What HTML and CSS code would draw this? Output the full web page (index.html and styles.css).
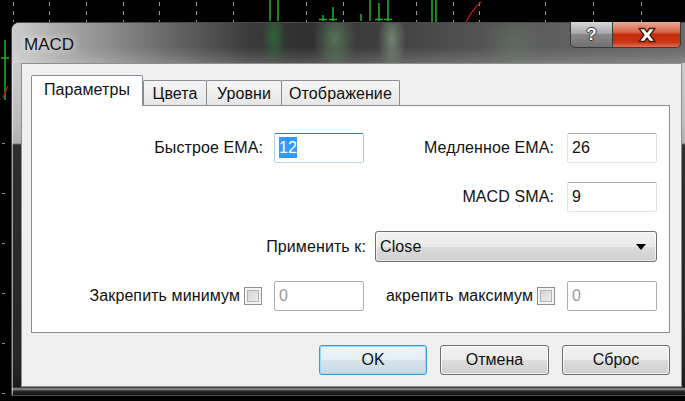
FILE: index.html
```html
<!DOCTYPE html>
<html lang="ru">
<head>
    <meta charset="UTF-8">
    <title>MACD</title>
    <link rel="stylesheet" href="styles.css">
</head>
<body>
    <svg class="chart" width="685" height="401" viewBox="0 0 685 401">
        <g stroke="#9a9a9a" stroke-width="1" stroke-dasharray="4 5">
            <line x1="13.5" y1="2" x2="13.5" y2="22"/>
            <line x1="49.5" y1="2" x2="49.5" y2="22"/>
            <line x1="86.5" y1="2" x2="86.5" y2="22"/>
            <line x1="123.5" y1="2" x2="123.5" y2="22"/>
            <line x1="159.5" y1="2" x2="159.5" y2="22"/>
            <line x1="196.5" y1="2" x2="196.5" y2="22"/>
            <line x1="233.5" y1="2" x2="233.5" y2="22"/>
            <line x1="306.5" y1="2" x2="306.5" y2="22"/>
            <line x1="343.5" y1="2" x2="343.5" y2="22"/>
            <line x1="416.5" y1="2" x2="416.5" y2="22"/>
            <line x1="453.5" y1="2" x2="453.5" y2="22"/>
            <line x1="479.5" y1="2" x2="479.5" y2="22"/>
            <line x1="545.5" y1="2" x2="545.5" y2="22"/>
            <line x1="593.5" y1="2" x2="593.5" y2="22"/>
            <line x1="641.5" y1="2" x2="641.5" y2="22"/>
        </g>
        <g stroke="#8a8a8a" stroke-width="1">
            <line x1="2" y1="143.5" x2="5" y2="143.5"/>
            <line x1="2" y1="193.5" x2="5" y2="193.5"/>
            <line x1="2" y1="243.5" x2="5" y2="243.5"/>
            <line x1="2" y1="293.5" x2="5" y2="293.5"/>
            <line x1="2" y1="343.5" x2="5" y2="343.5"/>
            <line x1="2" y1="393.5" x2="5" y2="393.5"/>
        </g>
        <g stroke="#1fb41f" stroke-width="1.5">
            <line x1="5" y1="40" x2="5" y2="100"/>
            <line x1="1" y1="58" x2="9" y2="58"/>
            <line x1="270" y1="0" x2="270" y2="21"/>
            <line x1="278" y1="0" x2="278" y2="21"/>
            <line x1="323" y1="15" x2="323" y2="21"/>
            <line x1="319" y1="19.5" x2="327" y2="19.5"/>
            <line x1="333" y1="7" x2="333" y2="21"/>
            <line x1="329" y1="19.5" x2="337" y2="19.5"/>
            <line x1="361" y1="14" x2="361" y2="21"/>
            <line x1="370" y1="0" x2="370" y2="21"/>
            <line x1="379" y1="3" x2="379" y2="21"/>
            <line x1="375" y1="19.5" x2="383" y2="19.5"/>
            <line x1="388" y1="0" x2="388" y2="21"/>
            <line x1="384" y1="19.5" x2="392" y2="19.5"/>
            <line x1="432" y1="0" x2="432" y2="22"/>
            <line x1="436" y1="0" x2="436" y2="22"/>
        </g>
        <path d="M3 98 L8 86" stroke="#c01818" stroke-width="1.2" fill="none"/>
        <path d="M466 22 Q472 10 481 2" stroke="#c01818" stroke-width="1.2" fill="none"/>
    </svg>

    <div class="window">
        <div class="titlebar">
            <span class="title">MACD</span>
            <div class="caption-btns">
                <span class="cap cap-help">?</span>
                <span class="cap cap-close">
                    <svg width="20" height="16" viewBox="0 0 20 16">
                        <path d="M2 1.5 H7.5 L10 5 L12.5 1.5 H18 L13 8 L18 14.5 H12.5 L10 11 L7.5 14.5 H2 L7 8 Z" fill="#fff" stroke="#4a1a10" stroke-width="1.3" stroke-linejoin="round"/>
                    </svg>
                </span>
            </div>
        </div>

        <div class="client">
            <div class="tabs">
                <div class="tab active">Параметры</div>
                <div class="tab tab-colors">Цвета</div>
                <div class="tab tab-levels">Уровни</div>
                <div class="tab tab-view">Отображение</div>
            </div>

            <div class="panel">
                <label class="lbl">Быстрое EMA:</label>
                <div class="field focus"><span class="sel">12</span></div>
                <label class="lbl lbl-right">Медленное EMA:</label>
                <div class="field">26</div>

                <div class="empty"></div>
                <div class="empty"></div>
                <label class="lbl lbl-right">MACD SMA:</label>
                <div class="field">9</div>

                <label class="lbl lbl-apply">Применить к:</label>
                <div class="combo">
                    <span>Close</span>
                    <span class="arrow"></span>
                </div>

                <div class="check-cell">
                    <span>Закрепить минимум</span>
                    <span class="checkbox"></span>
                </div>
                <div class="field disabled">0</div>
                <div class="check-cell">
                    <span>акрепить максимум</span>
                    <span class="checkbox"></span>
                </div>
                <div class="field disabled">0</div>
            </div>

            <div class="buttons">
                <button class="btn default">OK</button>
                <button class="btn wide">Отмена</button>
                <button class="btn">Сброс</button>
            </div>
        </div>
    </div>
</body>
</html>
```

FILE: styles.css
```css
* { box-sizing: border-box; }
html, body { margin: 0; }
body { width: 685px; height: 401px; overflow: hidden; position: relative; background: #000; font-family: "Liberation Sans", Arial, sans-serif; font-size: 16px; letter-spacing: 0.1px; color: #111; }

.chart { position: absolute; left: 0; top: 0; }

/* окно диалога поверх графика */
.window {
    position: absolute; left: 11px; top: 22px; width: 681px; height: 374px;
    display: flex; flex-direction: column;
    border: 1px solid #4a4a4a; border-radius: 8px 8px 0 0;
    background: linear-gradient(to bottom, #d6d6d6 0, #bdbdbd 100px, #b0b0b0 120px, #2e2e2e 122px, #262626 340px, #1c1c1c 364px, #9a9a9a 366px, #2a2a2a 368px, #101010 100%);
    box-shadow: inset 1px 1px 0 rgba(255,255,255,.55);
}

.titlebar {
    height: 40px; display: flex; align-items: flex-start;
    border-radius: 7px 7px 0 0;
    background:
        radial-gradient(ellipse 12px 30px at 262px 14px, rgba(40,140,60,.55), transparent),
        radial-gradient(ellipse 22px 34px at 323px 16px, rgba(110,165,115,.55), transparent),
        radial-gradient(ellipse 14px 34px at 380px 16px, rgba(150,185,150,.55), transparent),
        radial-gradient(ellipse 30px 30px at 500px 20px, rgba(110,140,110,.35), transparent),
        linear-gradient(to bottom, rgba(255,255,255,0) 24px, rgba(255,255,255,.18) 100%),
        linear-gradient(to right, #cdcdcd 0, #a8a8a8 50px, #6c6c6c 150px, #3c3c3c 235px, #2f2f2f 290px, #4a4a4a 420px, #5c5c5c 520px, #6a6a6a 100%);
}
.title { font-size: 17px; letter-spacing: 0; margin: 12px 0 0 12px; color: #141414; text-shadow: 0 0 6px rgba(255,255,255,.8), 0 0 10px rgba(255,255,255,.5); }

.caption-btns { margin: -1px 10px 0 auto; display: flex; height: 26px; }
.cap { display: flex; align-items: center; justify-content: center; height: 26px; border: 1px solid #3a3a3a; border-top: none; }
.cap-help {
    width: 43px; border-radius: 0 0 0 5px;
    background: linear-gradient(to bottom, #d8d8d8 0, #a9a9a9 45%, #8a8a8a 50%, #707070 100%);
    color: #fff; font-weight: bold; font-size: 17px;
    text-shadow: 1px 0 0 #333, -1px 0 0 #333, 0 1px 0 #333, 0 -1px 0 #333;
}
.cap-close {
    width: 68px; border-left: none; border-radius: 0 0 5px 0;
    background: linear-gradient(to bottom, #eaa895 0, #d6664a 40%, #c42e0d 50%, #c83312 80%, #e0704e 100%);
}

.client {
    margin: 0 9px; height: 324px;
    background: #f0f0f0; border: 1px solid #8e8e8e;
    padding: 11px 10px 0 9px;
    display: flex; flex-direction: column;
}

.tabs { display: flex; align-items: flex-end; height: 30px; }
.tab {
    height: 25px; display: flex; align-items: center; justify-content: center;
    border: 1px solid #898c95; border-bottom: none; border-radius: 2px 2px 0 0;
    background: linear-gradient(to bottom, #f6f6f6, #e6e6e6);
    padding-top: 2px;
}
.tab.active { width: 112px; height: 31px; margin-bottom: -1px; position: relative; z-index: 1; background: #fff; padding-top: 0; padding-bottom: 3px; }
.tab-colors { width: 64px; }
.tab-levels { width: 76px; margin-left: -1px; }
.tab-view { width: 119px; margin-left: -1px; }

.panel {
    width: 639px; height: 228px; background: #fff; border: 1px solid #898c95;
    padding-top: 27px;
    display: grid;
    grid-template-columns: 242px 90px 203px 90px;
    grid-template-rows: 30px 30px 31px 30px;
    row-gap: 19px;
}

.lbl { display: flex; align-items: center; justify-content: flex-end; padding-right: 11px; white-space: nowrap; }
.lbl-right { padding-right: 13px; }
.lbl-apply { grid-column: 1 / 3; padding-right: 0; margin-right: -2px; }

.field {
    height: 30px; line-height: 28px; padding-left: 4px;
    border: 1px solid; border-color: #abadb3 #dbdfe6 #e3e9ef #e2e3ea; border-radius: 2px;
    background: #fff;
}
.field.focus { border-color: #3d7bad #a4c9e3 #b7d9ed #b5cfe7; }
.sel { background: #3399ff; color: #fff; padding: 2px 0; }
.field.disabled { border-color: #a8aeb3; color: #9a9a9a; }

.combo {
    grid-column: 3 / 5; margin-left: 11px;
    display: flex; align-items: center; justify-content: space-between;
    padding: 0 10px 0 4px;
    border: 1px solid #707070; border-radius: 3px;
    background: linear-gradient(to bottom, #f2f2f2 0, #ebebeb 50%, #dddddd 51%, #cfcfcf 100%);
    box-shadow: inset 0 0 0 1px rgba(255,255,255,.6);
}
.arrow { width: 0; height: 0; border-left: 5px solid transparent; border-right: 5px solid transparent; border-top: 6px solid #000; }

.check-cell { display: flex; align-items: center; justify-content: flex-end; gap: 4px; padding-right: 12px; white-space: nowrap; }
.checkbox {
    width: 18px; height: 18px; border: 1px solid #8e8f8f;
    box-shadow: inset 0 0 0 2px #f4f4f4, inset 0 0 0 3px #aeb3b9;
    background: linear-gradient(135deg, #cfcfcf, #f2f2f2);
}

.buttons { display: flex; justify-content: flex-end; gap: 13px; margin-top: 12px; padding-right: 1px; }
.btn {
    width: 108px; height: 30px; font: inherit; color: #111;
    border: 1px solid #707070; border-radius: 3px;
    background: linear-gradient(to bottom, #f2f2f2 0, #ebebeb 50%, #dddddd 51%, #cfcfcf 100%);
    box-shadow: inset 0 0 0 1px rgba(255,255,255,.7);
}
.btn.wide { width: 109px; }
.btn.default { border-color: #3c9bd7; box-shadow: inset 0 0 0 1px #9ad8f7; background: linear-gradient(to bottom, #eef5f9 0, #e4eef4 50%, #d6e3ec 51%, #c8d8e4 100%); }
```
